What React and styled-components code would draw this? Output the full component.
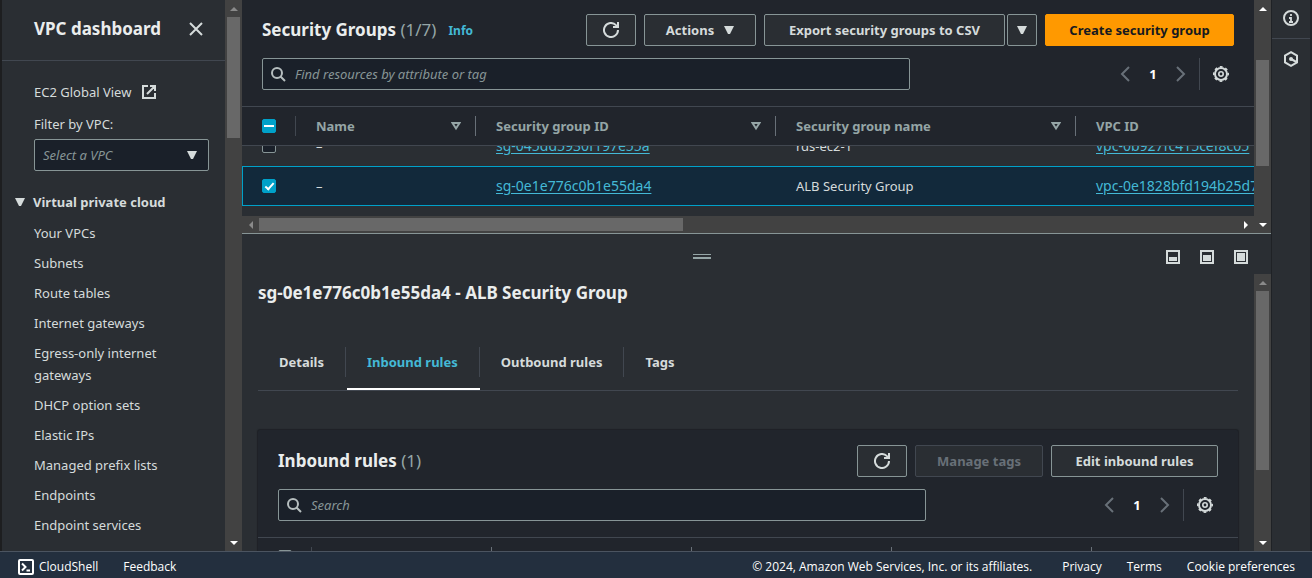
import React, { useLayoutEffect, useRef } from "react";
import styled, { createGlobalStyle, css } from "styled-components";

const c = {
  page: "#2a2e33",
  panel: "#21252c",
  field: "#1a2029",
  line: "#414750",
  edge: "#879596",
  text: "#d5dbdb",
  heading: "#eaeded",
  muted: "#95a5a6",
  faint: "#687078",
  link: "#44b9d6",
  accent: "#00a1c9",
  track: "#424242",
  thumb: "#686868",
};

const Global = createGlobalStyle`
  *, *::before, *::after { box-sizing: border-box; }
  body {
    margin: 0;
    background: ${c.page};
    color: ${c.text};
    font: 13px/22px "Noto Sans", "Open Sans", sans-serif;
  }
  button, input, select { font: inherit; color: inherit; }
  h1, h2, h3, ul, p { margin: 0; padding: 0; }
  ul { list-style: none; }
  a { color: inherit; text-decoration: none; }
  svg { display: block; flex: none; }
`;

const Shell = styled.div`
  display: flex;
  flex-direction: column;
  height: 100vh;
  overflow: hidden;
`;
const Body = styled.div`
  flex: 1;
  min-height: 0;
  display: flex;
  border-left: 2px solid #1d1e20;
`;

/* Scroll bars */
const Bar = styled.div`
  flex: none;
  display: flex;
  flex-direction: ${(p) => (p.$across ? "row" : "column")};
  background: ${c.track};
  ${(p) => (p.$across ? "height: 17px; padding: 2px 0;" : "width: 17px; padding: 0 2px;")}
`;
const BarArrow = styled.span`
  flex: none;
  display: grid;
  place-items: center;
  color: ${(p) => (p.$off ? "#8a8a8a" : "#ffffff")};
  ${(p) => (p.$across ? "width: 17px;" : "height: 17px;")}
`;
const BarPart = styled.span`
  flex: ${(p) => p.$grow} 0 0;
  background: ${(p) => (p.$thumb ? c.thumb : "transparent")};
`;
const arrowPaths = {
  up: "M0 6 4 2 8 6z",
  down: "M0 2 4 6 8 2z",
  left: "M6 0 2 4 6 8z",
  right: "M2 0 6 4 2 8z",
};
function ScrollBar({ across, before, size, after, startOff, endOff }) {
  const [a, b] = across ? ["left", "right"] : ["up", "down"];
  const arrow = (name, off) => (
    <BarArrow $across={across} $off={off}>
      <svg width="8" height="8"><path d={arrowPaths[name]} fill="currentColor" /></svg>
    </BarArrow>
  );
  return (
    <Bar $across={across} aria-hidden="true">
      {arrow(a, startOff)}
      <BarPart $grow={before} />
      <BarPart $grow={size} $thumb />
      <BarPart $grow={after} />
      {arrow(b, endOff)}
    </Bar>
  );
}

/* Icons */
const Stroke = ({ size = 16, w = 2, children }) => (
  <svg width={size} height={size} viewBox="0 0 16 16" fill="none" stroke="currentColor" strokeWidth={w} aria-hidden="true">
    {children}
  </svg>
);
const Caret = () => (
  <svg width="10" height="10" viewBox="0 0 10 10" aria-hidden="true"><path d="M0 1h10L6 9H4z" fill="currentColor" /></svg>
);
const SortIcon = () => (
  <svg width="10" height="10" viewBox="0 0 10 10" fill="none" stroke="currentColor" strokeWidth="2" aria-hidden="true">
    <path d="M1.5 2h7L5 7.500z" />
  </svg>
);
const CloseIcon = () => <Stroke><path d="m2 2 12 12M14 2 2 14" /></Stroke>;
const ExternalIcon = () => <Stroke><path d="M7 2H2v12h12V9M9 2h5v5M6 10l8-8" /></Stroke>;
const RefreshIcon = () => <Stroke><path d="M15 8A7 7 0 1 1 13 3.100L15 5M15 0v5h-5" /></Stroke>;
const SearchIcon = () => <Stroke><circle cx="7" cy="7" r="5" /><path d="m10.500 10.500 4.500 4.500" /></Stroke>;
const LeftIcon = () => <Stroke><path d="M12 1 5 8l7 7" /></Stroke>;
const RightIcon = () => <Stroke><path d="m4 1 7 7-7 7" /></Stroke>;
const GearIcon = () => (
  <Stroke>
    <circle cx="8" cy="8" r="6" />
    <circle cx="8" cy="8" r="7.300" strokeWidth="1.400" strokeDasharray="2.867 2.867" strokeDashoffset="1.433" />
    <circle cx="8" cy="8" r="2.200" strokeWidth="1.600" />
  </Stroke>
);
const InfoIcon = () => <Stroke><circle cx="8" cy="8" r="7" /><path d="M8 4v2M6 8h2v4M6 12h4" strokeWidth="1.800" /></Stroke>;
const HexIcon = () => (
  <Stroke><path d="m8 1.200 6 3.400v6.800l-6 3.400-6-3.400V4.600z" /><circle cx="8" cy="8" r="2" fill="currentColor" stroke="none" /><path d="m8 8 5.500 3" /></Stroke>
);
const ShellIcon = () => <Stroke><rect x="1" y="1" width="14" height="14" rx="1" /><path d="m4 4.500 3.500 3.500L4 11.500M8.500 11.500H12" /></Stroke>;
const PanelIcon = ({ top }) => (
  <svg width="14" height="14" viewBox="0 0 14 14" aria-hidden="true">
    <rect x="1" y="1" width="12" height="12" fill="none" stroke="currentColor" strokeWidth="2" />
    <rect x="3" y={top} width="8" height={11 - top} fill="currentColor" />
  </svg>
);

/* Shared controls */
const IconButton = styled.button`
  display: grid;
  place-items: center;
  width: ${(p) => p.$w || 26}px;
  height: 32px;
  padding: 0;
  border: 0;
  background: none;
  color: ${(p) => (p.$dim ? c.faint : c.text)};
`;
const Button = styled.button`
  display: flex;
  align-items: center;
  justify-content: center;
  gap: 10px;
  min-width: ${(p) => p.$min || 30}px;
  height: 32px;
  padding: 0;
  border: 1px solid ${c.edge};
  border-radius: 2px;
  background: ${c.page};
  color: ${c.text};
  font-weight: 700;
  white-space: nowrap;
  ${(p) => p.$primary && css`
    border-color: #ff9900;
    background: #ff9900;
    color: #16191f;
  `}
  &:disabled { border-color: ${c.line}; color: ${c.faint}; }
`;
const Split = styled.div`
  display: flex;
  gap: 2px;
`;
const Actions = styled.div`
  display: flex;
  gap: 8px;
  margin-left: auto;
`;
const HeaderRow = styled.div`
  display: flex;
  align-items: center;
`;
const Title = styled.h2`
  color: ${c.heading};
  font-size: 17px;
  line-height: 24px;
  font-weight: 700;
  white-space: nowrap;
`;
const Count = styled.span`
  color: ${c.muted};
  font-weight: 400;
`;
const InfoLink = styled.a`
  margin-left: 12px;
  padding-top: 2px;
  color: ${c.link};
  font-size: 12px;
  font-weight: 700;
`;
const SearchBox = styled.label`
  flex: 1;
  max-width: 648px;
  display: flex;
  align-items: center;
  gap: 9px;
  height: 32px;
  padding: 0 7px;
  border: 1px solid ${c.edge};
  border-radius: 2px;
  background: ${c.field};
  color: #b6bebf;
`;
const SearchInput = styled.input`
  flex: 1;
  min-width: 0;
  padding: 0;
  border: 0;
  outline: 0;
  background: none;
  font-size: ${(p) => p.$size || 13}px;
  &::placeholder { color: ${c.edge}; font-style: italic; opacity: 1; }
`;
const Pager = styled.div`
  display: flex;
  align-items: center;
  margin-left: auto;
`;
const PageNumber = styled.b`
  width: 30px;
  text-align: center;
  color: #ffffff;
`;
const PagerRule = styled.span`
  width: 1px;
  height: 32px;
  margin: 0 8px 0 5px;
  background: ${c.line};
`;
function ToolRow({ placeholder }) {
  return (
    <HeaderRow>
      <SearchBox>
        <SearchIcon />
        <SearchInput type="text" placeholder={placeholder} aria-label={placeholder} />
      </SearchBox>
      <Pager>
        <IconButton $dim aria-label="Previous page"><LeftIcon /></IconButton>
        <PageNumber>1</PageNumber>
        <IconButton $dim aria-label="Next page"><RightIcon /></IconButton>
        <PagerRule />
        <IconButton aria-label="Preferences"><GearIcon /></IconButton>
      </Pager>
    </HeaderRow>
  );
}
const Check = styled.input`
  appearance: none;
  display: grid;
  place-items: center;
  width: 14px;
  height: 14px;
  margin: 0;
  border: 1px solid ${c.edge};
  border-radius: 2px;
  background: ${c.field};
  ${(p) => p.$on && css`
    border-color: ${c.accent};
    background: ${c.accent};
    &::after {
      content: "";
      ${p.$on === "mixed"
        ? "width: 10px; height: 2px; background: #ffffff;"
        : "width: 5px; height: 9px; border: solid #ffffff; border-width: 0 2px 2px 0; transform: translateY(-1px) rotate(42deg);"}
    }
  `}
`;

/* Side navigation */
const Side = styled.aside`
  flex: none;
  display: flex;
  width: 240px;
`;
const SideContent = styled.nav`
  flex: 1;
  overflow: hidden;
`;
const SideHead = styled.div`
  display: flex;
  align-items: center;
  justify-content: space-between;
  height: 61px;
  padding: 0 16px 3px 32px;
  border-bottom: 1px solid ${c.line};
`;
const SideTools = styled.div`
  display: flex;
  flex-direction: column;
  padding: 20px 16px 0 32px;
`;
const ExternalLink = styled.a`
  display: flex;
  align-items: center;
  gap: 10px;
`;
const FilterLabel = styled.label`
  margin: 10px 0 4px;
`;
const SelectWrap = styled.div`
  display: grid;
  align-items: center;
  color: ${c.text};
  & > * { grid-area: 1 / 1; }
  & > svg { justify-self: end; margin-right: 12px; pointer-events: none; }
`;
const Select = styled.select`
  appearance: none;
  width: 100%;
  height: 32px;
  padding: 0 8px;
  border: 1px solid ${c.edge};
  border-radius: 2px;
  background: ${c.field};
  color: ${c.edge};
  font-style: italic;
`;
const Section = styled.button`
  display: flex;
  align-items: center;
  gap: 8px;
  margin-top: 20px;
  padding: 0 0 0 13px;
  border: 0;
  background: none;
  font-weight: 700;
`;
const NavList = styled.ul`
  display: flex;
  flex-direction: column;
  gap: 8px;
  padding: 9px 32px 0;
`;
const navItems = ["Your VPCs", "Subnets", "Route tables", "Internet gateways", "Egress-only internet gateways", "DHCP option sets", "Elastic IPs", "Managed prefix lists", "Endpoints", "Endpoint services", "NAT gateways"];

/* Main area */
const Main = styled.main`
  flex: 1;
  min-width: 0;
  display: flex;
  flex-direction: column;
`;
const TopPane = styled.section`
  flex: none;
  display: flex;
  background: ${c.panel};
  border-bottom: 1px solid ${c.edge};
`;
const PaneContent = styled.div`
  flex: 1;
  min-width: 0;
  display: flex;
  flex-direction: column;
`;
const Toolbar = styled.div`
  display: flex;
  flex-direction: column;
  gap: 12px;
  padding: 14px 20px 16px;
`;
const TableView = styled.div`
  height: 110px;
  overflow: hidden;
  background: ${c.page};
`;
const Table = styled.table`
  width: 1134px;
  margin-bottom: 10px;
  table-layout: fixed;
  border-collapse: separate;
  border-spacing: 0;
`;
const Th = styled.th`
  position: sticky;
  top: 0;
  z-index: 1;
  width: ${(p) => p.$w}px;
  height: 40px;
  padding: 0;
  border: solid ${c.line};
  border-width: 1px 0;
  background: ${c.panel};
  color: ${c.muted};
  text-align: left;
`;
const ThInner = styled.div`
  display: flex;
  align-items: center;
  justify-content: space-between;
  height: 20px;
  padding: 0 14px 0 20px;
  border-right: ${(p) => (p.$last ? "0" : `1px solid ${p.$soft ? c.line : c.faint}`)};
`;
const Td = styled.td`
  height: 40px;
  padding: 0 20px;
  white-space: nowrap;
`;
const Row = styled.tr`
  ${(p) => p.$selected && css`
    ${Td} {
      background: #12293b;
      border: solid ${c.accent};
      border-width: 1px 0;
    }
    ${Td}:first-child { border-left-width: 1px; padding-left: 19px; }
  `}
`;
const CellLink = styled.a`
  color: ${c.link};
  font-size: 14px;
  text-decoration: underline;
  text-underline-offset: 2px;
`;
const groups = [
  { id: "sg-045dd5930f197e55a", name: "rds-ec2-1", vpc: "vpc-0b927fc415cef8c05" },
  { id: "sg-0e1e776c0b1e55da4", name: "ALB Security Group", vpc: "vpc-0e1828bfd194b25d7", selected: true },
];

/* Split panel */
const Detail = styled.section`
  flex: 1;
  min-height: 0;
  display: flex;
  flex-direction: column;
`;
const Grip = styled.div`
  flex: none;
  display: flex;
  align-items: center;
  height: 40px;
  padding: 4px 19px 0 0;
`;
const Handle = styled.span`
  width: 18px;
  height: 5px;
  margin: 0 auto;
  border: solid ${c.muted};
  border-width: 1px 0 2px;
`;
const GripButtons = styled.div`
  display: flex;
  gap: 12px;
  padding-top: 2px;
`;
const DetailBody = styled.div`
  flex: 1;
  min-height: 0;
  display: flex;
`;
const DetailScroll = styled.div`
  flex: 1;
  min-width: 0;
  overflow: hidden;
  padding: 7px 16px 0;
`;
const Tabs = styled.div`
  display: flex;
  height: 59px;
  margin-top: 27px;
  padding-top: 15px;
  border-bottom: 1px solid ${c.line};
`;
const Tab = styled.button`
  display: flex;
  flex-direction: column;
  justify-content: space-between;
  padding: 0 0 0 1px;
  border: 0;
  background: none;
  color: ${(p) => (p["aria-selected"] ? c.link : c.text)};
  font-weight: 700;
  white-space: nowrap;
  &::after {
    content: "";
    width: 100%;
    height: 2px;
    background: ${(p) => (p["aria-selected"] ? "#ffffff" : "transparent")};
  }
`;
const TabText = styled.span`
  height: 30px;
  padding: 4px 21px 4px 20px;
  border-right: 1px solid ${(p) => (p.$last ? "transparent" : c.line)};
`;
const Card = styled.div`
  margin-top: 39px;
  border-radius: 2px;
  background: ${c.panel};
  box-shadow: 0 0 1px 1px #1e2126;
`;
const CardTools = styled(Toolbar)`
  padding-top: 15px;
  border-bottom: 1px solid ${c.line};
`;
const RulesTable = styled.table`
  width: 100%;
  table-layout: fixed;
  border-spacing: 0;
`;
const RulesTh = styled.th`
  width: ${(p) => p.$w}px;
  padding: 9px 0;
`;

/* Right rail and footer */
const Rail = styled.aside`
  flex: none;
  display: flex;
  flex-direction: column;
  width: 41px;
  border: solid #1f2226;
  border-width: 0 2px 0 1px;
`;
const RailButton = styled.button`
  display: grid;
  place-items: center;
  height: ${(p) => (p.$first ? 39 : 41)}px;
  padding: 0 0 2px;
  border: 0;
  border-bottom: ${(p) => (p.$first ? `1px solid ${c.line}` : "0")};
  background: none;
`;
const Footer = styled.footer`
  flex: none;
  display: flex;
  align-items: center;
  gap: 25px;
  height: 27px;
  padding: 4px 17px 0 18px;
  border-top: 1px solid #4b5460;
  background: #232f3e;
  color: #ffffff;
  font-family: "Open Sans", "Noto Sans", sans-serif;
  font-size: 12px;
  white-space: nowrap;
`;
const FooterLink = styled.a`
  display: flex;
  align-items: center;
  gap: 5px;
`;
const Copyright = styled.span`
  margin-left: auto;
  padding-right: 5px;
`;

export default function App() {
  const view = useRef(null);
  useLayoutEffect(() => {
    view.current.scrollTop = view.current.scrollHeight;
  }, []);
  return (
    <Shell>
      <Global />
      <Body>
        <Side>
          <SideContent>
            <SideHead>
              <Title as="h1">VPC dashboard</Title>
              <IconButton aria-label="Close navigation"><CloseIcon /></IconButton>
            </SideHead>
            <SideTools>
              <ExternalLink href="#">EC2 Global View <ExternalIcon /></ExternalLink>
              <FilterLabel htmlFor="vpc">Filter by VPC:</FilterLabel>
              <SelectWrap>
                <Select id="vpc" defaultValue=""><option value="">Select a VPC</option></Select>
                <Caret />
              </SelectWrap>
            </SideTools>
            <Section aria-expanded="true"><Caret />Virtual private cloud</Section>
            <NavList>
              {navItems.map((n) => <li key={n}><a href="#">{n}</a></li>)}
            </NavList>
          </SideContent>
          <ScrollBar before={0} size={121} after={396} startOff />
        </Side>

        <Main>
          <TopPane>
            <PaneContent>
              <Toolbar>
                <HeaderRow>
                  <Title>Security Groups <Count>(1/7)</Count></Title>
                  <InfoLink href="#">Info</InfoLink>
                  <Actions>
                    <Button $min={50} aria-label="Refresh"><RefreshIcon /></Button>
                    <Button $min={112}>Actions <Caret /></Button>
                    <Split>
                      <Button $min={241}>Export security groups to CSV</Button>
                      <Button aria-label="More export options"><Caret /></Button>
                    </Split>
                    <Button $primary $min={189}>Create security group</Button>
                  </Actions>
                </HeaderRow>
                <ToolRow placeholder="Find resources by attribute or tag" />
              </Toolbar>
              <TableView ref={view}>
                <Table>
                  <thead>
                    <tr>
                      <Th $w={54}><ThInner $soft><Check type="checkbox" $on="mixed" aria-label="Select all" /></ThInner></Th>
                      <Th $w={180}><ThInner>Name <SortIcon /></ThInner></Th>
                      <Th $w={300}><ThInner>Security group ID <SortIcon /></ThInner></Th>
                      <Th $w={300}><ThInner>Security group name <SortIcon /></ThInner></Th>
                      <Th $w={300}><ThInner $last>VPC ID</ThInner></Th>
                    </tr>
                  </thead>
                  <tbody>
                    {groups.map((g) => (
                      <Row key={g.id} $selected={g.selected}>
                        <Td><Check type="checkbox" defaultChecked={g.selected} $on={g.selected} aria-label={`Select ${g.name}`} /></Td>
                        <Td>–</Td>
                        <Td><CellLink href="#">{g.id}</CellLink></Td>
                        <Td>{g.name}</Td>
                        <Td><CellLink href="#">{g.vpc}</CellLink></Td>
                      </Row>
                    ))}
                  </tbody>
                </Table>
              </TableView>
              <ScrollBar across before={0} size={424} after={554} startOff />
            </PaneContent>
            <ScrollBar before={43} size={106} after={50} />
          </TopPane>

          <Detail>
            <Grip>
              <Handle />
              <GripButtons>
                <IconButton $w={22} aria-label="Small panel"><PanelIcon top={7} /></IconButton>
                <IconButton $w={22} aria-label="Medium panel"><PanelIcon top={5} /></IconButton>
                <IconButton $w={22} aria-label="Full panel"><PanelIcon top={3} /></IconButton>
              </GripButtons>
            </Grip>
            <DetailBody>
              <DetailScroll>
                <Title>sg-0e1e776c0b1e55da4 - ALB Security Group</Title>
                <Tabs role="tablist">
                  {["Details", "Inbound rules", "Outbound rules", "Tags"].map((t) => (
                    <Tab key={t} role="tab" aria-selected={t === "Inbound rules"}><TabText $last={t === "Tags"}>{t}</TabText></Tab>
                  ))}
                </Tabs>
                <Card>
                  <CardTools>
                    <HeaderRow>
                      <Title as="h3">Inbound rules <Count>(1)</Count></Title>
                      <Actions>
                        <Button $min={50} aria-label="Refresh rules"><RefreshIcon /></Button>
                        <Button $min={128} disabled>Manage tags</Button>
                        <Button $min={167}>Edit inbound rules</Button>
                      </Actions>
                    </HeaderRow>
                    <ToolRow placeholder="Search" />
                  </CardTools>
                  <RulesTable>
                    <thead>
                      <tr>
                        <RulesTh $w={54}><ThInner $soft><Check type="checkbox" aria-label="Select all rules" /></ThInner></RulesTh>
                        <RulesTh $w={180}><ThInner /></RulesTh>
                        <RulesTh $w={200}><ThInner /></RulesTh>
                        <RulesTh $w={200}><ThInner /></RulesTh>
                        <RulesTh $w={200}><ThInner /></RulesTh>
                        <RulesTh><ThInner $last /></RulesTh>
                      </tr>
                    </thead>
                  </RulesTable>
                </Card>
              </DetailScroll>
              <ScrollBar before={0} size={179} after={64} startOff />
            </DetailBody>
          </Detail>
        </Main>

        <Rail>
          <RailButton $first aria-label="Info"><InfoIcon /></RailButton>
          <RailButton aria-label="Tutorials"><HexIcon /></RailButton>
        </Rail>
      </Body>
      <Footer>
        <FooterLink href="#"><ShellIcon />CloudShell</FooterLink>
        <FooterLink href="#">Feedback</FooterLink>
        <Copyright>© 2024, Amazon Web Services, Inc. or its affiliates.</Copyright>
        <FooterLink href="#">Privacy</FooterLink>
        <FooterLink href="#">Terms</FooterLink>
        <FooterLink href="#">Cookie preferences</FooterLink>
      </Footer>
    </Shell>
  );
}
